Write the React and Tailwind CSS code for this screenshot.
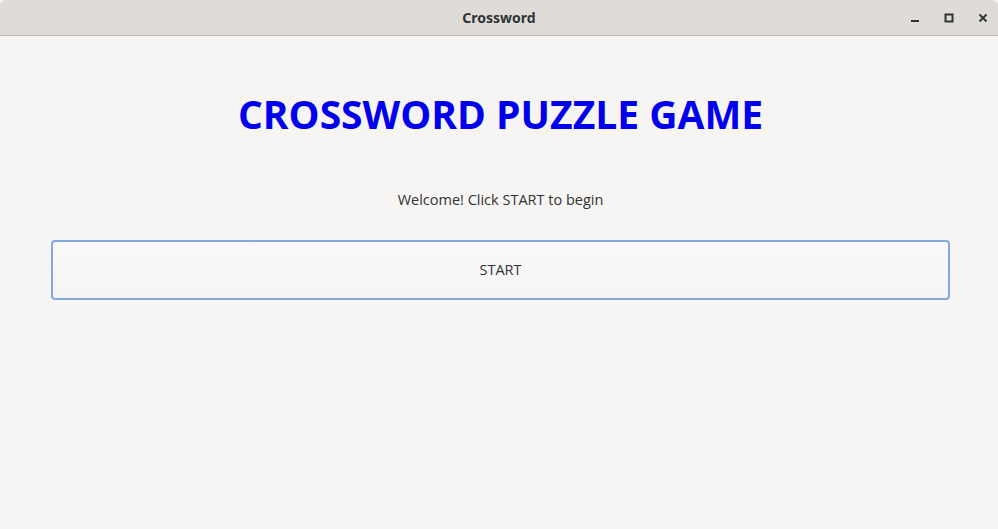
export default function App() {
  return (
    <div className="w-[998px] h-[529px] bg-[#f6f5f4] flex flex-col overflow-hidden font-['Open_Sans',sans-serif]">
      {/* title bar */}
      <header className="h-[36px] shrink-0 rounded-t-[6px] bg-[#dfdcd8] border-b border-[#c0bcb8] flex items-center relative">
        <div className="flex-1 text-center text-[14px] font-bold text-[#2e3436] font-['Noto_Sans',sans-serif]">
          Crossword
        </div>
        <div className="absolute right-[10px] top-0 h-full flex items-center gap-[24px] text-[#2e3436]">
          <svg width="10" height="10" viewBox="0 0 10 10">
            <rect x="1" y="7" width="8" height="2" fill="currentColor" />
          </svg>
          <svg width="10" height="10" viewBox="0 0 10 10">
            <rect x="1.5" y="1.5" width="7" height="7" fill="none" stroke="currentColor" strokeWidth="2" />
          </svg>
          <svg width="10" height="10" viewBox="0 0 10 10">
            <path d="M1.5 1.5 L8.5 8.5 M8.5 1.5 L1.5 8.5" stroke="currentColor" strokeWidth="1.8" />
          </svg>
        </div>
      </header>

      <main className="flex-1 flex flex-col items-center pl-[51px] pr-[48px]">
        <h1 className="mt-[50px] text-[39px] leading-[56px] font-bold text-[#0000ee]">
          CROSSWORD PUZZLE GAME
        </h1>
        <p className="mt-[48px] text-[14.5px] leading-[20px] text-[#333333]">Welcome! Click START to begin</p>
        <button className="mt-[30px] w-full h-[60px] rounded-[4px] border-2 border-[#85a9dc] bg-gradient-to-b from-[#f9f9f9] to-[#f5f5f5] text-[14.5px] text-[#333333]">
          START
        </button>
      </main>
    </div>
  )
}
